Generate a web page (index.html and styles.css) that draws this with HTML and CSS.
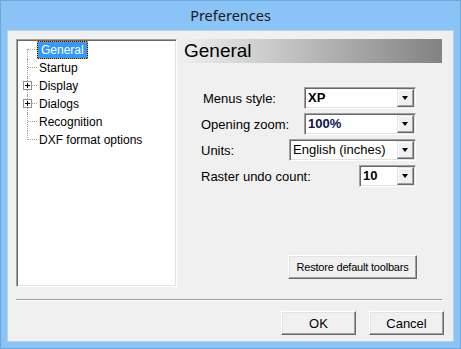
FILE: index.html
```html
<!DOCTYPE html>
<html lang="en">
<head>
    <meta charset="UTF-8">
    <title>Preferences</title>
    <link rel="stylesheet" href="styles.css">
</head>
<body>

    <div class="window">
        <!-- Title bar -->
        <div class="titlebar">Preferences</div>

        <div class="client">
            <div class="main">
                <!-- Category tree -->
                <ul class="tree">
                    <li class="first"><span class="label selected">General</span></li>
                    <li><span class="label">Startup</span></li>
                    <li><span class="expander"></span><span class="label">Display</span></li>
                    <li><span class="expander"></span><span class="label">Dialogs</span></li>
                    <li><span class="label">Recognition</span></li>
                    <li class="last"><span class="label">DXF format options</span></li>
                </ul>

                <!-- Settings page -->
                <div class="page">
                    <div class="page-header">General</div>
                    <div class="fields">
                        <div class="field">
                            <span class="field-label menus">Menus style:</span>
                            <div class="combo combo-menus"><span class="value bold">XP</span><span class="drop"></span></div>
                        </div>
                        <div class="field">
                            <span class="field-label">Opening zoom:</span>
                            <div class="combo combo-zoom"><span class="value bold navy">100%</span><span class="drop"></span></div>
                        </div>
                        <div class="field">
                            <span class="field-label">Units:</span>
                            <div class="combo combo-units"><span class="value">English (inches)</span><span class="drop"></span></div>
                        </div>
                        <div class="field">
                            <span class="field-label">Raster undo count:</span>
                            <div class="combo combo-undo"><span class="value bold">10</span><span class="drop"></span></div>
                        </div>
                    </div>
                    <button class="btn restore">Restore default toolbars</button>
                </div>
            </div>

            <div class="separator"></div>

            <div class="actions">
                <button class="btn">OK</button>
                <button class="btn">Cancel</button>
            </div>
        </div>
    </div>

</body>
</html>
```

FILE: styles.css
```css
body {
    margin: 0;
    font-family: "Liberation Sans", Arial, sans-serif;
    font-size: 13px;
    color: #000;
    background-color: #8ac4f6;
}

/* Window frame */
.window {
    width: 461px;
    height: 349px;
    box-sizing: border-box;
    border: 1px solid #6ea6d8;
    background-color: #8ac4f6;
    display: flex;
    flex-direction: column;
}

.titlebar {
    height: 29px;
    line-height: 29px;
    text-align: center;
    font-family: "Noto Sans", "Open Sans", sans-serif;
    font-size: 14.5px;
    color: #1a1a1a;
}

.client {
    flex: 1;
    margin: 0 6px 6px 6px;
    border: 1px solid #b4d4ee;
    background-color: #f0f0f0;
    padding: 8px 11px 0 8px;
}

.main {
    display: flex;
    height: 248px;
}

/* Sunken tree view */
.tree {
    width: 161px;
    box-sizing: border-box;
    margin: 0;
    padding: 1px;
    list-style: none;
    background-color: #fff;
    border: 1px solid;
    border-color: #a0a0a0 #fff #fff #a0a0a0;
    box-shadow: inset 1px 1px #696969, inset -1px -1px #e3e3e3;
    font-size: 12px;
}

.tree li {
    position: relative;
    display: flex;
    align-items: flex-start;
    height: 18px;
    padding-left: 19px;
}

/* dotted connector lines */
.tree li::before {
    content: "";
    position: absolute;
    left: 9px;
    top: 0;
    height: 18px;
    border-left: 1px dotted #a0a0a0;
}

.tree li.first::before {
    top: 8px;
    height: 10px;
}

.tree li.last::before {
    height: 9px;
}

.tree li::after {
    content: "";
    position: absolute;
    left: 10px;
    top: 8px;
    width: 9px;
    border-top: 1px dotted #a0a0a0;
}

.tree .expander {
    position: absolute;
    left: 5px;
    top: 4px;
    width: 9px;
    height: 9px;
    box-sizing: border-box;
    border: 1px solid #919191;
    background:
        linear-gradient(#000, #000) center / 5px 1px no-repeat,
        linear-gradient(#000, #000) center / 1px 5px no-repeat,
        #fff;
    z-index: 1;
}

.tree .label {
    display: block;
    height: 18px;
    box-sizing: border-box;
    line-height: 16px;
    padding: 0 1px;
    border: 1px solid transparent;
    white-space: nowrap;
}

.tree .label.selected {
    padding: 0 3px;
    color: #fff;
    border: 1px dotted #f0a040;
    background:
        linear-gradient(#3399ff, #3399ff) padding-box,
        #1a1a1a border-box;
}

/* Right hand page */
.page {
    width: 263px;
    margin-left: 2px;
    display: flex;
    flex-direction: column;
}

.page-header {
    height: 24px;
    line-height: 24px;
    padding-left: 5px;
    font-size: 19px;
    background: linear-gradient(to right, #f0f0f0, #828282);
}

.fields {
    margin-top: 24px;
    display: flex;
    flex-direction: column;
    gap: 4px;
}

.field {
    display: flex;
    align-items: center;
    height: 22px;
    padding: 0 26px 0 22px;
}

.field-label.menus {
    padding-left: 2px;
}

.combo {
    margin-left: auto;
    height: 22px;
    box-sizing: border-box;
    display: flex;
    background-color: #fff;
    border: 1px solid;
    border-color: #a0a0a0 #fff #fff #a0a0a0;
    box-shadow: inset 1px 1px #696969, inset -1px -1px #e3e3e3;
    padding: 1px;
}

.combo-menus { width: 112px; }
.combo-zoom { width: 112px; }
.combo-units { width: 127px; }
.combo-undo { width: 57px; }

.combo .value {
    flex: 1;
    line-height: 18px;
    padding-left: 2px;
    white-space: nowrap;
    overflow: hidden;
}

.combo .value.bold {
    font-weight: bold;
}

.combo .value.navy {
    color: #0a1450;
}

.combo .drop {
    position: relative;
    width: 17px;
    height: 18px;
    box-sizing: border-box;
    background-color: #f0f0f0;
    border: 1px solid;
    border-color: #e3e3e3 #696969 #696969 #e3e3e3;
    box-shadow: inset -1px -1px #a0a0a0, inset 1px 1px #fff;
}

.combo .drop::after {
    content: "";
    position: absolute;
    left: 4px;
    top: 6px;
    border-left: 3.5px solid transparent;
    border-right: 3.5px solid transparent;
    border-top: 4px solid #000;
}

/* Raised push buttons */
.btn {
    font-family: "Liberation Sans", Arial, sans-serif;
    font-size: 13px;
    color: #000;
    width: 75px;
    height: 24px;
    padding: 0;
    background-color: #f0f0f0;
    border: 1px solid;
    border-color: #fff #696969 #696969 #fff;
    box-shadow: inset -1px -1px #a0a0a0, inset 1px 1px #e3e3e3;
    border-radius: 0;
}

.btn.restore {
    width: 129px;
    font-size: 11px;
    letter-spacing: -0.2px;
    margin-top: auto;
    margin-bottom: 8px;
    margin-right: 25px;
    align-self: flex-end;
}

.separator {
    margin-top: 12px;
    height: 0;
    border-top: 1px solid #a0a0a0;
    border-bottom: 1px solid #fff;
}

.actions {
    margin-top: 10px;
    margin-right: -2px;
    display: flex;
    justify-content: flex-end;
    gap: 13px;
}
```
